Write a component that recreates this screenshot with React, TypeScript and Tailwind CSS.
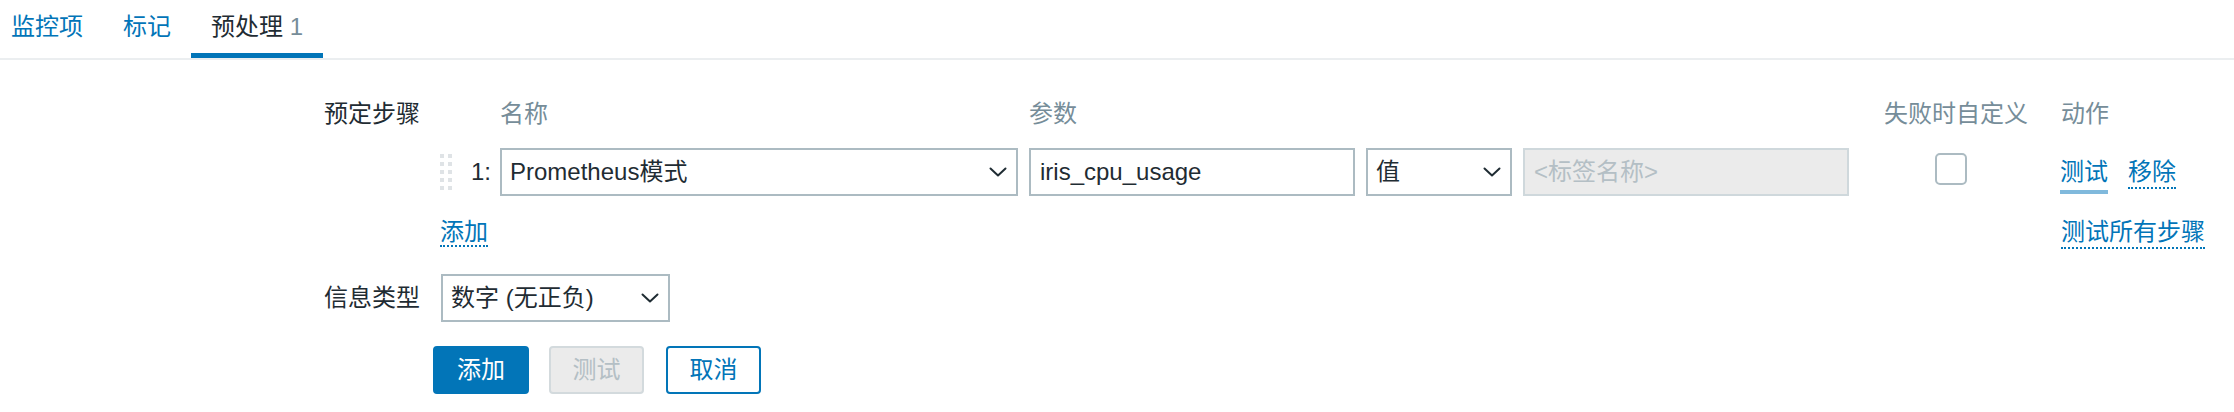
import clsx from "clsx";

const tabs = [
  { label: "监控项", count: null as number | null, active: false },
  { label: "标记", count: null as number | null, active: false },
  { label: "预处理", count: 1, active: true },
];

function Chevron() {
  return (
    <svg width="18" height="10" viewBox="0 0 18 10" fill="none" stroke="#1f2c33" strokeWidth="2" strokeLinecap="round" strokeLinejoin="round">
      <path d="M1.5 1.5l7.5 7 7.5-7" />
    </svg>
  );
}

function Select({ value, className }: { value: string; className?: string }) {
  return (
    <div className={clsx("flex h-[48px] shrink-0 items-center justify-between border-2 border-[#acbbc2] bg-white pl-[8px] pr-[9px]", className)}>
      <span className="leading-[30px]">{value}</span>
      <Chevron />
    </div>
  );
}

function DragHandle() {
  const dots = [0, 8, 16, 24, 32];
  return (
    <svg width="12" height="36" viewBox="0 0 12 36" fill="#dfe3e6">
      {dots.map(y => (
        <g key={y}>
          <rect x="0" y={y} width="4" height="4" />
          <rect x="8" y={y} width="4" height="4" />
        </g>
      ))}
    </svg>
  );
}

export default function App() {
  return (
    <div className="h-[412px] w-full overflow-hidden bg-white text-[24px] text-[#1f2c33] font-['Liberation_Sans','Noto_Sans_CJK_SC',sans-serif]">
      {/* tabs */}
      <div className="flex border-b-2 border-[#ebeef0]">
        <div className="-ml-[9px] flex">
          {tabs.map(t => (
            <div
              key={t.label}
              className={clsx(
                "border-b-[5px] px-5 pt-[12px] pb-[11px] leading-[30px]",
                t.active ? "border-[#0275b8] text-[#1f2c33]" : "border-transparent text-[#0275b8]"
              )}
            >
              {t.label}
              {t.count !== null && <span className="text-[#768d99]"> {t.count}</span>}
            </div>
          ))}
        </div>
      </div>

      {/* preprocessing steps */}
      <div className="flex pt-[39px]">
        <div className="w-[420px] shrink-0 text-right leading-[30px]">预定步骤</div>
        <div className="ml-[20px]">
          <div className="flex leading-[30px] text-[#768d99]">
            <div className="w-[60px]" />
            <div className="w-[529px]">名称</div>
            <div className="w-[855px]">参数</div>
            <div className="w-[177px]">失败时自定义</div>
            <div>动作</div>
          </div>

          <div className="mt-[19px] flex h-[48px] items-center">
            <div className="flex w-[60px] items-center">
              <DragHandle />
              <span className="flex-1 pr-[9px] text-right leading-[30px]">1:</span>
            </div>
            <Select value="Prometheus模式" className="w-[518px]" />
            <div className="ml-[11px] flex h-[48px] w-[326px] items-center border-2 border-[#acbbc2] bg-white pl-[9px] leading-[30px]">
              iris_cpu_usage
            </div>
            <Select value="值" className="ml-[11px] w-[146px]" />
            <div className="ml-[11px] flex h-[48px] w-[326px] items-center border-2 border-[#cfd8dc] bg-[#ebebeb] pl-[9px] leading-[30px] text-[#b4bfc5]">
              &lt;标签名称&gt;
            </div>
            <div className="w-[211px] self-start pt-[5px] pl-[86px]">
              <div className="h-[32px] w-[32px] rounded-[5px] border-2 border-[#acbbc2] bg-white" />
            </div>
            <div className="flex gap-5 self-start pt-[9px] text-[#0275b8]">
              <span className="border-b-4 border-[#80b9dc] pb-[3px] leading-[30px]">测试</span>
              <span className="self-start border-b-2 border-dotted border-[#0275b8] leading-[30px]">移除</span>
            </div>
          </div>

          <div className="mt-[21px] flex items-start leading-[30px] text-[#0275b8]">
            <div className="w-[1621px]">
              <span className="border-b-2 border-dotted border-[#0275b8]">添加</span>
            </div>
            <span className="border-b-2 border-dotted border-[#0275b8]">测试所有步骤</span>
          </div>
        </div>
      </div>

      {/* type of information */}
      <div className="mt-[25px] flex items-center">
        <div className="w-[420px] shrink-0 text-right leading-[30px]">信息类型</div>
        <Select value="数字 (无正负)" className="ml-[21px] w-[229px]" />
      </div>

      {/* buttons */}
      <div className="mt-[24px] flex pl-[433px] leading-[30px]">
        <button className="h-[48px] w-[96px] rounded-[4px] border-2 border-[#0275b8] bg-[#0275b8] text-white">添加</button>
        <button className="ml-[20px] h-[48px] w-[95px] rounded-[4px] border-2 border-[#d3dadd] bg-[#ebebeb] text-[#b4bfc5]" disabled>
          测试
        </button>
        <button className="ml-[22px] h-[48px] w-[95px] rounded-[4px] border-2 border-[#0275b8] bg-white text-[#0275b8]">取消</button>
      </div>
    </div>
  );
}
